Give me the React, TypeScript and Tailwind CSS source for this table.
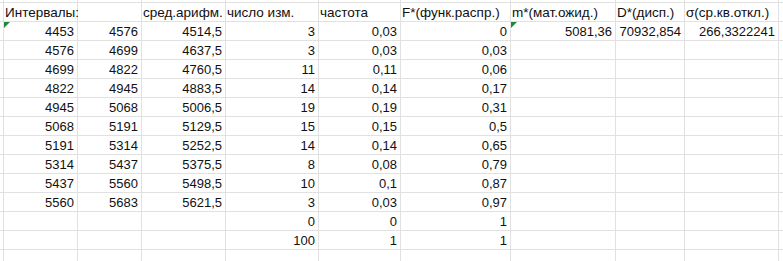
const widths = [74, 64, 84, 93, 82, 110, 105, 69, 94];
const cellW = ['w-[74px]', 'w-[64px]', 'w-[84px]', 'w-[93px]', 'w-[82px]', 'w-[110px]', 'w-[105px]', 'w-[69px]', 'w-[94px]'];

const headers = ['Интервалы:', '', 'сред.арифм.', 'число изм.', 'частота', 'F*(функ.распр.)', 'm*(мат.ожид.)', 'D*(дисп.)', 'σ(ср.кв.откл.)'];

const rows: string[][] = [
  ['4453', '4576', '4514,5', '3', '0,03', '0', '5081,36', '70932,854', '266,3322241'],
  ['4576', '4699', '4637,5', '3', '0,03', '0,03', '', '', ''],
  ['4699', '4822', '4760,5', '11', '0,11', '0,06', '', '', ''],
  ['4822', '4945', '4883,5', '14', '0,14', '0,17', '', '', ''],
  ['4945', '5068', '5006,5', '19', '0,19', '0,31', '', '', ''],
  ['5068', '5191', '5129,5', '15', '0,15', '0,5', '', '', ''],
  ['5191', '5314', '5252,5', '14', '0,14', '0,65', '', '', ''],
  ['5314', '5437', '5375,5', '8', '0,08', '0,79', '', '', ''],
  ['5437', '5560', '5498,5', '10', '0,1', '0,87', '', '', ''],
  ['5560', '5683', '5621,5', '3', '0,03', '0,97', '', '', ''],
  ['', '', '', '0', '0', '1', '', '', ''],
  ['', '', '', '100', '1', '1', '', '', ''],
  ['', '', '', '', '', '', '', '', ''],
];

function Flag() {
  return (
    <svg className="absolute left-0 top-0" width="6" height="6" viewBox="0 0 6 6">
      <polygon points="0,0 6,0 0,6" fill="#1d8a3a" />
    </svg>
  );
}

function Row({ cells, header, flags, h = 'h-[19px]' }: { cells: string[]; header?: boolean; flags?: number[]; h?: string }) {
  return (
    <div className={`flex ${h} border-b border-[#e1e1e1]`}>
      <div className="w-[4px] shrink-0 border-r border-[#e1e1e1]" />
      {widths.map((_, i) => (
        <div
          key={i}
          className={`relative ${cellW[i]} shrink-0 border-r border-[#e1e1e1] flex items-end pb-[2px] ${
            header ? 'justify-start pl-[1px] text-[13.5px] z-10' : 'justify-end pr-[3px] text-[13px]'
          } whitespace-nowrap leading-none`}
        >
          {flags?.includes(i) && <Flag />}
          <span>{cells[i] ?? ''}</span>
        </div>
      ))}
      <div className="flex-1" />
    </div>
  );
}

export default function App() {
  return (
    <div className="w-[783px] h-[261px] overflow-hidden bg-white text-[#111] font-['Liberation_Sans',Arial,sans-serif]">
      <Row cells={[]} h="h-[3px]" />
      <Row cells={headers} header />
      {rows.map((r, i) => (
        <Row key={i} cells={r} flags={i === 0 ? [0, 6] : undefined} />
      ))}
    </div>
  );
}
